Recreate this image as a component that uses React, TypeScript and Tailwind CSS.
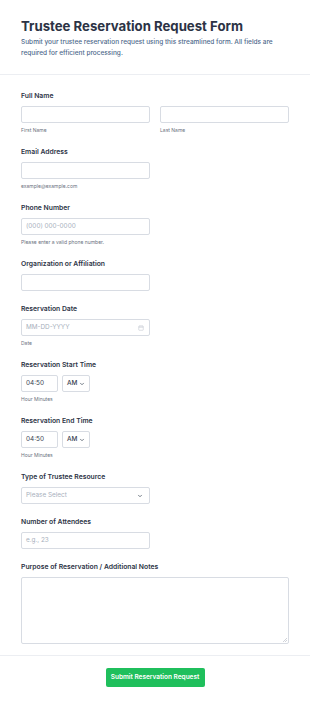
import React from "react";

const font = { fontFamily: "Inter, 'Noto Sans', sans-serif" };

function Label({ children }: { children: React.ReactNode }) {
  return <div className="text-[6.8px] leading-[10px] font-semibold text-[#2c3345]">{children}</div>;
}
function Sub({ children }: { children: React.ReactNode }) {
  return <div className="mt-[3px] text-[5px] leading-[8px] text-[#6b7280]">{children}</div>;
}
const inputCls =
  "h-[17px] border border-[#d8dce3] rounded-[2px] bg-white flex items-center px-[4px] text-[6.4px]";

function Chevron() {
  return (
    <svg width="6" height="6" viewBox="0 0 24 24" fill="none" stroke="#4b5563" strokeWidth="3" strokeLinecap="round" strokeLinejoin="round" className="shrink-0">
      <path d="M6 9l6 6 6-6" />
    </svg>
  );
}

function TimeRow() {
  return (
    <div className="mt-[5px] flex gap-[4px]">
      <div className={`${inputCls} w-[37px] text-[#374151]`}>04:50</div>
      <div className="h-[17px] w-[28px] border border-[#d8dce3] rounded-[2px] bg-white flex items-center justify-between pl-[4px] pr-[4px] text-[6.4px] text-[#374151] font-medium">
        <span>AM</span>
        <Chevron />
      </div>
    </div>
  );
}

export default function App() {
  return (
    <div className="w-[310px] min-h-[704px] bg-white" style={font}>
      <div className="px-[21px] pt-[16px] pb-[16px] border-b border-[#eceef2]">
        <h1 className="text-[13.2px] leading-[20px] font-bold text-[#2c3345]">
          Trustee Reservation Request Form
        </h1>
        <p className="mt-[1px] text-[6.5px] leading-[10.5px] font-medium text-[#4f6a8c]">
          Submit your trustee reservation request using this streamlined form. All fields are required for efficient processing.
        </p>
      </div>

      <div className="px-[21px] pt-[16px] flex flex-col gap-[13px]">
        <div>
          <Label>Full Name</Label>
          <div className="mt-[5px] grid grid-cols-2 gap-[10px]">
            <div>
              <div className={inputCls}></div>
              <Sub>First Name</Sub>
            </div>
            <div>
              <div className={inputCls}></div>
              <Sub>Last Name</Sub>
            </div>
          </div>
        </div>

        <div>
          <Label>Email Address</Label>
          <div className={`${inputCls} mt-[5px] w-[129px]`}></div>
          <Sub>example@example.com</Sub>
        </div>

        <div>
          <Label>Phone Number</Label>
          <div className={`${inputCls} mt-[5px] w-[129px] text-[#a8b0bd]`}>(000) 000-0000</div>
          <Sub>Please enter a valid phone number.</Sub>
        </div>

        <div>
          <Label>Organization or Affiliation</Label>
          <div className={`${inputCls} mt-[5px] w-[129px]`}></div>
        </div>

        <div>
          <Label>Reservation Date</Label>
          <div className={`${inputCls} mt-[5px] w-[129px] justify-between text-[#a8b0bd]`}>
            <span>MM-DD-YYYY</span>
            <svg width="6" height="6" viewBox="0 0 12 12" fill="none" stroke="#b8bec8" strokeWidth="1" className="mr-[1px]">
              <rect x="1.5" y="2" width="9" height="8.5" rx="1" />
              <path d="M1.5 4.5h9M4 1v2M8 1v2" />
            </svg>
          </div>
          <Sub>Date</Sub>
        </div>

        <div>
          <Label>Reservation Start Time</Label>
          <TimeRow />
          <Sub>Hour Minutes</Sub>
        </div>

        <div>
          <Label>Reservation End Time</Label>
          <TimeRow />
          <Sub>Hour Minutes</Sub>
        </div>

        <div>
          <Label>Type of Trustee Resource</Label>
          <div className={`${inputCls} mt-[5px] w-[129px] justify-between text-[#a8b0bd]`}>
            <span>Please Select</span>
            <span className="mr-[2px] flex"><Chevron /></span>
          </div>
        </div>

        <div>
          <Label>Number of Attendees</Label>
          <div className={`${inputCls} mt-[5px] w-[129px] text-[#a8b0bd]`}>e.g., 23</div>
        </div>

        <div>
          <Label>Purpose of Reservation / Additional Notes</Label>
          <div className="mt-[5px] h-[67px] border border-[#d8dce3] rounded-[2px] relative">
            <svg className="absolute right-[1px] bottom-[1px]" width="4" height="4" viewBox="0 0 4 4" stroke="#b0b6c0" strokeWidth="0.6">
              <path d="M4 0L0 4M4 2L2 4" />
            </svg>
          </div>
        </div>
      </div>

      <div className="mt-[11px] border-t border-[#eceef2] flex justify-center pt-[12px] pb-[17px]">
        <button className="h-[19px] w-[99px] rounded-[2px] bg-[#1fbf5c] text-white text-[6.5px] font-semibold">
          Submit Reservation Request
        </button>
      </div>
    </div>
  );
}
